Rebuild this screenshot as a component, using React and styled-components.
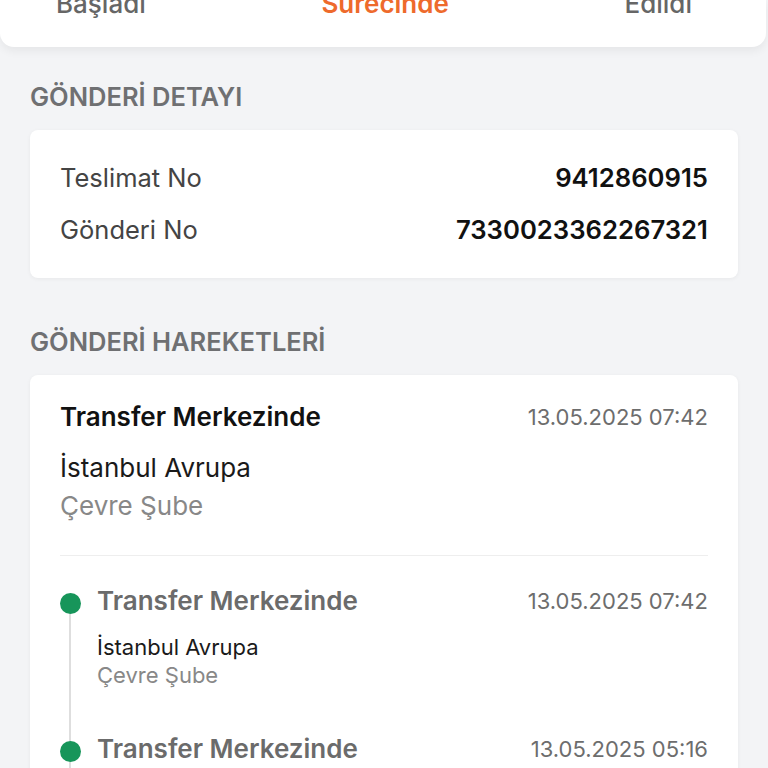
import styled, { createGlobalStyle } from 'styled-components';

const steps = [
  { label: 'Başladı', active: false },
  { label: 'Sürecinde', active: true },
  { label: 'Edildi', active: false },
];

const details = [
  { label: 'Teslimat No', value: '9412860915' },
  { label: 'Gönderi No', value: '7330023362267321' },
];

const movements = [
  { title: 'Transfer Merkezinde', date: '13.05.2025 07:42', city: 'İstanbul Avrupa', branch: 'Çevre Şube' },
  { title: 'Transfer Merkezinde', date: '13.05.2025 05:16', city: 'İstanbul Avrupa', branch: 'Çevre Şube' },
];

const latest = movements[0];

const App = () => (
  <>
    <GlobalStyle />
    <Page>
      <StatusCard>
        {steps.map((s) => (
          <Step key={s.label} $active={s.active}>{s.label}</Step>
        ))}
      </StatusCard>

      <Section $top={35}>
        <SectionTitle>GÖNDERİ DETAYI</SectionTitle>
        <Card>
          <DetailList>
            {details.map((d) => (
              <DetailRow key={d.label}>
                <DetailLabel>{d.label}</DetailLabel>
                <DetailValue>{d.value}</DetailValue>
              </DetailRow>
            ))}
          </DetailList>
        </Card>
      </Section>

      <Section $top={49}>
        <SectionTitle>GÖNDERİ HAREKETLERİ</SectionTitle>
        <Card>
          <Latest>
            <HeadRow>
              <MoveTitle>{latest.title}</MoveTitle>
              <MoveDate>{latest.date}</MoveDate>
            </HeadRow>
            <City>{latest.city}</City>
            <Branch>{latest.branch}</Branch>
          </Latest>
          <Timeline>
            {movements.map((m, i) => (
              <TimelineItem key={i}>
                <Dot />
                <TimelineBody>
                  <HeadRow>
                    <MoveTitle $muted>{m.title}</MoveTitle>
                    <MoveDate>{m.date}</MoveDate>
                  </HeadRow>
                  <City $small>{m.city}</City>
                  <Branch $small>{m.branch}</Branch>
                </TimelineBody>
              </TimelineItem>
            ))}
          </Timeline>
        </Card>
      </Section>
    </Page>
  </>
);

export default App;

const GlobalStyle = createGlobalStyle`
  html, body {
    margin: 0;
    padding: 0;
    background: #f3f4f6;
    font-family: Inter, "Noto Sans", sans-serif;
    -webkit-font-smoothing: antialiased;
  }
  * { box-sizing: border-box; }
`;

const Page = styled.div`
  height: 768px;
  overflow: hidden;
  display: flex;
  flex-direction: column;
`;

const StatusCard = styled.div`
  flex: 0 0 47px;
  background: #fff;
  margin-right: 2px;
  border-radius: 0 0 14px 14px;
  box-shadow: 0 4px 10px rgba(0, 0, 0, 0.06);
  display: flex;
  justify-content: space-between;
  align-items: flex-start;
  padding: 0 74px 0 56px;
`;

const Step = styled.div`
  margin-top: -9px;
  font-size: 26px;
  line-height: 1;
  font-weight: ${({ $active }) => ($active ? 600 : 500)};
  color: ${({ $active }) => ($active ? '#ee6a2c' : '#666')};
`;

const Section = styled.section`
  padding: 0 30px;
  margin-top: ${({ $top }) => $top}px;
`;

const SectionTitle = styled.h2`
  margin: 0 0 18px;
  font-size: 25.5px;
  line-height: 30px;
  font-weight: 600;
  color: #6f7072;
`;

const Card = styled.div`
  background: #fff;
  border-radius: 8px;
  box-shadow: 0 1px 4px rgba(0, 0, 0, 0.05);
  padding: 0 30px;
`;

const DetailList = styled.div`
  display: flex;
  flex-direction: column;
  padding: 32px 0;
  gap: 20px;
`;

const DetailRow = styled.div`
  display: flex;
  justify-content: space-between;
  align-items: center;
  line-height: 32px;
`;

const DetailLabel = styled.span`
  font-size: 25.5px;
  color: #444;
`;

const DetailValue = styled.span`
  font-size: 25.7px;
  font-weight: 600;
  color: #111;
`;

const Latest = styled.div`
  padding: 26px 0 28px;
  border-bottom: 1px solid #eeeeee;
`;

const HeadRow = styled.div`
  display: flex;
  justify-content: space-between;
  align-items: center;
`;

const MoveTitle = styled.div`
  font-size: 26px;
  line-height: 32px;
  font-weight: 600;
  color: ${({ $muted }) => ($muted ? '#6b6b6b' : '#111')};
`;

const MoveDate = styled.div`
  font-size: 22px;
  line-height: 32px;
  color: #6d6d6d;
`;

const City = styled.div`
  margin-top: ${({ $small }) => ($small ? '16px' : '18px')};
  font-size: ${({ $small }) => ($small ? '22px' : '26px')};
  line-height: ${({ $small }) => ($small ? '28px' : '34px')};
  color: #1a1a1a;
`;

const Branch = styled.div`
  font-size: ${({ $small }) => ($small ? '22px' : '26px')};
  line-height: ${({ $small }) => ($small ? '28px' : '42px')};
  color: #888;
`;

const Timeline = styled.div`
  padding-top: 29px;
  display: flex;
  flex-direction: column;
`;

const TimelineItem = styled.div`
  position: relative;
  display: flex;
  gap: 16px;
  padding-bottom: 44px;

  &::before {
    content: '';
    position: absolute;
    left: 9px;
    top: 20px;
    bottom: -12px;
    width: 2px;
    background: #dedede;
  }
`;

const Dot = styled.span`
  flex: 0 0 auto;
  width: 21px;
  height: 21px;
  margin-top: 8px;
  border-radius: 50%;
  background: #17955a;
  position: relative;
  z-index: 1;
`;

const TimelineBody = styled.div`
  flex: 1;
`;
